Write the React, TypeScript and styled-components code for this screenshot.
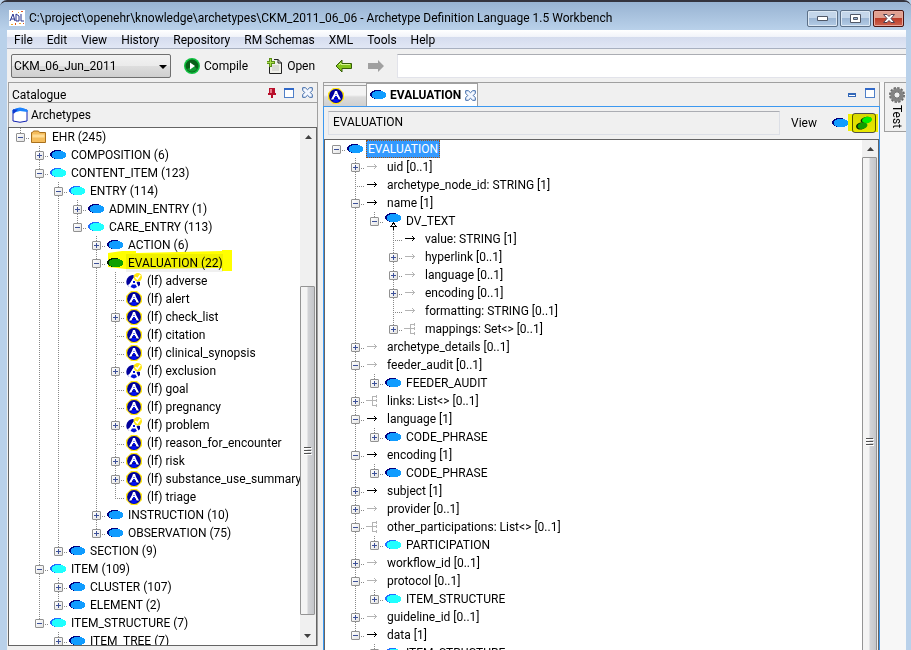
import React from "react";
import styled, { createGlobalStyle, css } from "styled-components";

const GlobalStyle = createGlobalStyle`
  *, *::before, *::after { box-sizing: border-box; }
  body {
    margin: 0;
    font-family: Roboto, "Noto Sans", sans-serif;
    font-size: 12px;
    line-height: 18px;
    color: #000;
    background: #b9d1ea;
  }
  button, input, select { font: inherit; color: inherit; }
`;

/* ---------- icons ---------- */

const Glyph = styled.svg`
  display: block;
  flex: none;
`;

type Tone = "blue" | "cyan" | "green";
const tones: Record<Tone, [string, string]> = {
  blue: ["#000080", "#109cff"],
  cyan: ["#2070ff", "#20ffff"],
  green: ["#002000", "#10a000"],
};

const ClassIcon = ({ tone = "blue" }: { tone?: Tone }) => (
  <Glyph width="16" height="16" viewBox="0 0 16 16" shapeRendering="crispEdges">
    <ellipse cx="7.5" cy="7.5" rx="7.5" ry="4.5" fill={tones[tone][0]} />
    <ellipse cx="9" cy="8" rx="7" ry="4.5" fill={tones[tone][1]} />
  </Glyph>
);

const InheritedIcon = () => (
  <Glyph width="16" height="18" viewBox="0 0 16 18" shapeRendering="crispEdges">
    <ellipse cx="7.5" cy="5.5" rx="7.5" ry="4.5" fill="#000080" />
    <ellipse cx="9" cy="6" rx="7" ry="4.5" fill="#109cff" />
    <path d="M8.5 10v1M8.5 15v3" stroke="#000" />
    <path d="M8.5 11l3 3.500h-6z" fill="#fff" stroke="#000" />
  </Glyph>
);

const ArchetypeIcon = () => (
  <Glyph width="16" height="16" viewBox="0 0 16 16">
    <path d="M5 0h6l5 5v6l-5 5H5l-5-5V5z" fill="#ffe610" />
    <circle cx="8" cy="8" r="6.900" fill="#00009c" />
    <path d="M7 3h2l1 3 3 5.500h-2.500L9.500 9h-3l-1 2.500H3L6 6z" fill="#fff" />
    <path d="M7.500 6h1v1h-1zM7 8h2v2H7z" fill="#0010e0" />
    <path d="M6 11h4l1 2.500-3 1-3-1z" fill="#0010f8" />
  </Glyph>
);

const SpecialisedIcon = () => (
  <Glyph width="16" height="16" viewBox="0 0 16 16">
    <path d="M7.500 2A7 7 0 0 0 1 12l2 1.500 5-8z" fill="#00009c" />
    <path d="M0 12l3-.5L7 5h2l2.500 6-1 4H5l-2-2z" fill="#fff" />
    <path d="M1 8l3-4 3-2 .5 2L4 10l-3 2zM12 8.500l2 .5v3l-1.500 1.500-2-4z" fill="#00009c" />
    <path d="M7 8h2v2H7zM6 11.500h3.500L11 14l-3 1.500L4.500 14z" fill="#0010d8" />
    <circle cx="11.800" cy="4.200" r="4.200" fill="#ffe610" />
    <path d="M9.300 4l2 2 3-4" fill="none" stroke="#fff" strokeWidth="1.500" />
  </Glyph>
);

const FolderIcon = () => (
  <Glyph width="16" height="16" viewBox="0 0 16 16">
    <path d="M.5 3.500h1l1-1.500h5l1 1.500h6v10H.5z" fill="#f5bd5c" stroke="#a9701c" />
    <path d="M1.500 5.500h12v3h-12z" fill="#ffdd96" />
  </Glyph>
);

const AttributeIcon = ({ optional }: { optional?: boolean }) => (
  <Glyph width="16" height="16" viewBox="0 0 16 16" shapeRendering="crispEdges">
    <path
      d="M1 7.500h10M8 5.500h1M9 6.500h1M9 8.500h1M8 9.500h1"
      stroke={optional ? "#b4b4b4" : "#000"}
      fill="none"
    />
  </Glyph>
);

const ContainerIcon = () => (
  <Glyph width="16" height="16" viewBox="0 0 16 16" shapeRendering="crispEdges">
    <path d="M0 7.500h6M6.500 3v10M6 3.500h5M6 7.500h5M6 12.500h5M10.500 2v3M10.500 6v3M10.500 11v3" stroke="#b4b4b4" fill="none" />
  </Glyph>
);

const AppIcon = () => (
  <Glyph width="16" height="16" viewBox="0 0 16 16">
    <path fill="#fff" d="M0 0h16v16H0z" />
    <path d="M1 11l3-7 2 7M2 9h3M7 4v7h3V6L7 4M12 4v7h3" fill="none" stroke="#27318f" />
    <path d="M3 1h1v1H3zM12 1h2v1h-2zM6 13h1v2H6zM14 13h1v1h-1z" fill="#e2571f" />
    <path d="M2 14h2v1H2zM9 2h1v1H9zM10 13h2v1h-2z" fill="#e9a92a" />
  </Glyph>
);

const CompileIcon = () => (
  <Glyph width="16" height="16" viewBox="0 0 16 16">
    <circle cx="8" cy="8" r="8" fill="#10c040" />
    <circle cx="8" cy="8" r="6.500" fill="#086018" />
    <path d="M3 11a6 6 0 0 0 10 0l-3-3z" fill="#109830" />
    <path d="M6 4.500v7L11 8z" fill="#fff" />
  </Glyph>
);

const OpenIcon = () => (
  <Glyph width="16" height="16" viewBox="0 0 16 16">
    <path d="M2.500 3.500v12h12V5L11 1.500H5z" fill="#f0f0ea" />
    <path d="M2.500 7v8.500h12V5L11 1.500H7" fill="none" stroke="#222" />
    <path d="M5 8h7M5 10h7M5 12h7" fill="none" stroke="#c4c4c0" />
    <path d="M11 1v4h4" fill="none" stroke="#222" />
    <path d="M2 0h3v3h3v3H5v3H2V6H0V3h2z" fill="#5c9018" />
    <path d="M3 1h1v3h3v1H4v3H3V5H0V4h3z" fill="#a8dc48" />
  </Glyph>
);

const BackIcon = () => (
  <Glyph width="18" height="14" viewBox="0 0 18 14">
    <path d="M1 7l6-6v3.500h9.500v5H7V13z" fill="#84c41c" stroke="#345c08" />
    <path d="M4 6l2-2v1.500h9" fill="none" stroke="#d4f48c" />
  </Glyph>
);

const ForwardIcon = () => (
  <Glyph width="18" height="14" viewBox="0 0 18 14">
    <path d="M17 7l-6-6v3H1v6h10v3z" fill="#a0a0a0" />
  </Glyph>
);

const PinIcon = () => (
  <Glyph width="8" height="12" viewBox="0 0 8 12" shapeRendering="crispEdges">
    <path d="M1 1h6v5h1v2H5v3H3V8H0V6h1z" fill="#b8102c" />
    <path d="M2 2h2v4H2z" fill="#e87888" />
  </Glyph>
);

const MaximiseIcon = () => (
  <Glyph width="10" height="10" viewBox="0 0 10 10" shapeRendering="crispEdges">
    <path d="M.5.5h9v9h-9z" fill="#fff" stroke="#5080c8" />
    <path d="M0 0h10v2H0z" fill="#3068c8" />
  </Glyph>
);

const MinimiseIcon = () => (
  <Glyph width="8" height="10" viewBox="0 0 8 10" shapeRendering="crispEdges">
    <path d="M.5 6.500h7v2h-7z" fill="#fff" stroke="#3468b8" />
    <path d="M0 5h8v2H0z" fill="#3468b8" />
  </Glyph>
);

const CloseIcon = () => (
  <Glyph width="11" height="11" viewBox="0 0 11 11">
    <path d="M.7.7h2.600l2.200 2 2.200-2h2.600v2.600l-2 2.200 2 2.200v2.600H7.700l-2.200-2-2.200 2H.7V7.700l2-2.200-2-2.200z" fill="#f4f8ff" stroke="#3c68a8" strokeWidth="1" />
  </Glyph>
);

const CatalogueIcon = () => (
  <Glyph width="16" height="16" viewBox="0 0 16 16">
    <path d="M1 3v11q7 2.500 14 0V3z" fill="#fff" stroke="#1020b0" />
    <path d="M.5 3Q8-2 15.500 3v2L8 4 .5 6z" fill="#1c84ff" />
    <path d="M1 2.500h5l-4 4H1z" fill="#1038d0" />
  </Glyph>
);

const DifferentialIcon = () => (
  <Glyph width="16" height="14" viewBox="0 0 16 14">
    <ellipse cx="10" cy="4" rx="5.500" ry="3" fill="#003000" transform="rotate(-12 10 4)" />
    <ellipse cx="11" cy="4" rx="5" ry="3.200" fill="#00f010" transform="rotate(-12 11 4)" />
    <ellipse cx="5" cy="10" rx="5" ry="3.500" fill="#002800" transform="rotate(-12 5 10)" />
    <ellipse cx="6.500" cy="9.700" rx="5" ry="3.200" fill="#109c00" transform="rotate(-12 6.500 9.700)" />
  </Glyph>
);

const GearIcon = () => (
  <Glyph width="16" height="16" viewBox="0 0 16 16">
    <circle cx="8" cy="8" r="6.800" fill="none" stroke="#686868" strokeWidth="2.400" strokeDasharray="2.300 1.260" />
    <circle cx="8" cy="8" r="5" fill="none" stroke="#848484" strokeWidth="3.400" />
    <circle cx="8" cy="8" r="3.200" fill="#f0f0f0" stroke="#606060" />
  </Glyph>
);

/* ---------- window frame ---------- */

const Frame = styled.div`
  height: 100vh;
  display: flex;
  flex-direction: column;
  overflow: hidden;
  border-top: 2px solid #34343e;
  border-radius: 7px 7px 0 0;
  background: #b9d1ea;
`;

const TitleBar = styled.header`
  flex: none;
  height: 28px;
  padding: 0 7px 0 9px;
  display: flex;
  align-items: center;
  gap: 4px;
  background: linear-gradient(#98b3d2, #b9d1ea);
`;

const Title = styled.h1`
  flex: 1;
  margin: 0;
  padding-top: 4px;
  font-size: 12px;
  font-weight: 400;
  white-space: nowrap;
`;

const TitleIcon = styled.span`
  padding-top: 4px;
`;

const CaptionButtons = styled.div`
  display: flex;
  gap: 2px;
  padding-top: 5px;
`;

const CaptionButton = styled.button<{ $danger?: boolean }>`
  width: 31px;
  height: 17px;
  padding: 0;
  display: flex;
  align-items: center;
  justify-content: center;
  border: 1px solid ${(p) => (p.$danger ? "#4c1410" : "#5c7088")};
  border-radius: 2px;
  box-shadow: inset 0 0 0 1px ${(p) => (p.$danger ? "#e8a89c" : "#dce8f4")};
  background: ${(p) =>
    p.$danger
      ? "linear-gradient(#e0a090 45%, #bc3c28 50%, #cc6450)"
      : "linear-gradient(#c4d6ea 45%, #9cb6d4 50%, #b4cce6)"};
`;

const Client = styled.div`
  flex: 1;
  min-height: 0;
  margin: 0 5px 0 7px;
  display: flex;
  flex-direction: column;
  background: #f0f0f0;
`;

const MenuBar = styled.nav`
  flex: none;
  height: 19px;
  padding-left: 7px;
  display: flex;
  gap: 14px;
  border-bottom: 1px solid #a8b0c0;
  background: linear-gradient(#fff, #f2f4fa 36%, #d5dcee 40%, #e1e7f5);
`;

const MenuItem = styled.button`
  padding: 0;
  border: 0;
  background: none;
  line-height: 20px;
`;

const Toolbar = styled.div`
  flex: none;
  height: 33px;
  padding: 5px 0 5px 4px;
  display: flex;
  align-items: center;
`;

const RepositorySelect = styled.select`
  width: 160px;
  height: 24px;
  padding: 0 0 0 2px;
  appearance: none;
  border: 1px solid #707070;
  border-radius: 2px;
  background: linear-gradient(#f2f2f2, #ebebeb 48%, #dddddd 52%, #cfcfcf);
`;

const SelectWrap = styled.div`
  position: relative;
  margin-right: 13px;
  &::after {
    content: "";
    position: absolute;
    right: 4px;
    top: 11px;
    border: 4px solid transparent;
    border-top-color: #000;
    pointer-events: none;
  }
`;

const ToolButton = styled.button<{ $gap: number }>`
  padding: 0;
  margin-right: ${(p) => p.$gap}px;
  display: flex;
  align-items: center;
  gap: 4px;
  border: 0;
  background: none;
  line-height: 18px;
`;

const AddressInput = styled.input`
  flex: 1;
  min-width: 0;
  height: 24px;
  border: 1px solid #e2e3ea;
  border-top-color: #abadb3;
  border-right: 0;
  background: #fff;
`;

/* ---------- panels ---------- */

const Workspace = styled.main`
  flex: 1;
  min-height: 0;
  display: grid;
  grid-template-columns: 311px minmax(0, 1fr) 26px;
  grid-template-rows: minmax(0, 1fr);
`;

const Catalogue = styled.section`
  min-height: 0;
  margin: 0 0 4px 1px;
  display: flex;
  flex-direction: column;
  border: 1px solid #a0a0a0;
  border-bottom: 0;
`;

const CatalogueHeader = styled.header`
  flex: none;
  height: 20px;
  padding: 0 4px 0 3px;
  display: flex;
  align-items: center;
  gap: 8px;
  border-bottom: 1px solid #a0a0a0;
`;

const PanelTitle = styled.h2`
  flex: 1;
  margin: 0;
  padding-top: 4px;
  font-size: 12px;
  font-weight: 400;
`;

const IconButton = styled.button`
  flex: none;
  padding: 0;
  border: 0;
  background: none;
`;

const SectionBar = styled.div`
  flex: none;
  height: 24px;
  padding: 0 3px;
  display: flex;
  align-items: center;
  gap: 3px;
`;

const TreeBox = styled.div<{ $open?: boolean }>`
  flex: 1;
  min-height: 0;
  display: flex;
  background: #fff;
  border: 1px solid #646464;
  ${(p) =>
    p.$open
      ? css`border-bottom: 0;`
      : css`margin: 0 0 0 -1px;`}
`;

const Details = styled.section`
  min-height: 0;
  margin-left: 5px;
  display: flex;
  flex-direction: column;
  border-top: 1px solid #a0a0a0;
`;

const TabStrip = styled.div`
  flex: none;
  height: 23px;
  padding-right: 4px;
  display: flex;
  align-items: flex-end;
  border: 1px solid #a0a0a0;
  border-width: 0 1px;
`;

const Tab = styled.button<{ $active?: boolean }>`
  padding: 0 0 0 4px;
  display: flex;
  align-items: center;
  gap: 4px;
  border: 1px solid #a0a0a0;
  border-bottom: 0;
  ${(p) =>
    p.$active
      ? css`
          height: 23px;
          padding: 0 1px 0 3px;
          background: #fff;
          font-weight: 700;
        `
      : css`
          width: 42px;
          height: 21px;
          border-right: 0;
          border-left: 0;
          background: linear-gradient(#f4f4f4 45%, #dcdcdc 55%, #d0d0d0);
        `}
`;

const StripSpace = styled.div`
  flex: 1;
`;

const StripTools = styled.div`
  align-self: center;
  padding-bottom: 4px;
  display: flex;
  gap: 9px;
`;

const DetailBody = styled.div`
  flex: 1;
  min-height: 0;
  display: flex;
  flex-direction: column;
  border: 1px solid #3c98f0;
  border-bottom: 0;
`;

const DetailBar = styled.div`
  flex: none;
  height: 32px;
  padding-left: 4px;
  display: flex;
  align-items: center;
`;

const NameInput = styled.input`
  flex: 1;
  min-width: 0;
  height: 24px;
  padding: 0 4px 2px;
  border: 1px solid #dcdfe6;
  border-top-color: #abadb3;
  background: #f0f0f0;
`;

const ViewLabel = styled.span`
  margin: 0 15px 0 11px;
`;

const ToggleWrap = styled.div`
  position: relative;
  padding: 0 3px 0 4px;
`;

const ToggleButton = styled.button`
  width: 24px;
  height: 20px;
  padding: 0;
  display: flex;
  align-items: center;
  justify-content: center;
  border: 1px solid #505050;
  border-radius: 3px;
  background: linear-gradient(#d8d8d8, #e8e8e8);
`;

const Marker = styled.svg`
  position: absolute;
  mix-blend-mode: multiply;
  pointer-events: none;
`;

const ToggleMarker = styled(Marker)`
  left: 0;
  top: 1px;
`;

const RowMarker = styled(Marker)`
  left: 0;
  top: -4px;
`;

const SideColumn = styled.aside`
  background: #f7f7f7;
`;

const SideTab = styled.button`
  width: 22px;
  height: 50px;
  margin-left: 4px;
  padding: 4px 0 0 3px;
  display: flex;
  flex-direction: column;
  align-items: center;
  gap: 2px;
  border: 1px solid #a0a0a0;
  border-right: 0;
  background: #f0f0f0;
`;

const SideTabText = styled.span`
  writing-mode: vertical-rl;
  line-height: 16px;
`;

/* ---------- scroll bar ---------- */

const ScrollBar = styled.div`
  flex: none;
  width: 16px;
  display: flex;
  flex-direction: column;
  overflow: hidden;
  background: #f0f0f0;
`;

const ScrollArrow = styled.button<{ $down?: boolean }>`
  flex: none;
  height: 17px;
  padding: 0;
  display: flex;
  align-items: center;
  justify-content: center;
  border: 0;
  background: none;
  transform: ${(p) => (p.$down ? "rotate(180deg)" : "none")};
`;

const ScrollGap = styled.div<{ $grow: number }>`
  flex: ${(p) => p.$grow} 1 0;
`;

const Thumb = styled.div<{ $grow?: number }>`
  flex: ${(p) => (p.$grow ? `${p.$grow} 1 0` : "0 0 570px")};
  margin-right: 1px;
  display: flex;
  align-items: center;
  justify-content: center;
  border: 1px solid #949494;
  border-radius: 1px;
  background: linear-gradient(to right, #f4f4f4 45%, #d2d3d6 55%, #c4c6ca);
`;

const Grip = () => (
  <Glyph width="8" height="8" viewBox="0 0 8 8" shapeRendering="crispEdges">
    <path d="M0 .5h7M0 3.500h7M0 6.500h7" stroke="#505050" />
    <path d="M0 1.500h8M0 4.500h8M0 7.500h8" stroke="#fff" />
  </Glyph>
);

const ArrowGlyph = () => (
  <Glyph width="7" height="4" viewBox="0 0 7 4">
    <path d="M0 4L3.500 0 7 4z" fill="#404040" />
  </Glyph>
);

/* ---------- tree ---------- */

type IconKind = Tone | "folder" | "a" | "s" | "inherit" | "req" | "opt" | "set";

interface Node {
  label: string;
  icon: IconKind;
  state?: "open" | "closed";
  selected?: boolean;
  marked?: boolean;
  children?: Node[];
}

const Rows = styled.div`
  flex: 1;
  min-width: 0;
  padding-left: 2px;
  overflow: hidden;
`;

const Row = styled.div`
  height: 18px;
  display: flex;
  white-space: nowrap;
`;

const dotsDown = "repeating-linear-gradient(to bottom, #888 0 1px, transparent 1px 2px)";
const dotsAcross = "repeating-linear-gradient(to right, #888 0 1px, transparent 1px 2px)";

const Guide = styled.span<{ $up?: boolean; $down?: boolean; $across?: boolean }>`
  flex: none;
  width: 19px;
  height: 18px;
  padding: 5px 0 0 5px;
  background-repeat: no-repeat;
  background-image: ${(p) =>
    [p.$up && dotsDown, p.$down && dotsDown, p.$across && dotsAcross].filter(Boolean).join(", ") || "none"};
  background-size: ${(p) =>
    [p.$up && "1px 10px", p.$down && "1px 8px", p.$across && "10px 1px"].filter(Boolean).join(", ") || "auto"};
  background-position: ${(p) =>
    [p.$up && "9px 0", p.$down && "9px 10px", p.$across && "9px 10px"].filter(Boolean).join(", ") || "0 0"};
`;

const Expander = styled.button`
  width: 9px;
  height: 9px;
  padding: 0;
  display: block;
  border: 1px solid #919191;
  border-radius: 1px;
  background: linear-gradient(135deg, #fff, #e4e4e4);
`;

const ItemBox = styled.span`
  position: relative;
  display: flex;
  align-items: center;
`;

const IconSlot = styled.span`
  width: 20px;
  padding-left: 1px;
`;

const Label = styled.span<{ $selected?: boolean; $marked?: boolean }>`
  padding-left: 2px;
  height: 18px;
  line-height: 18px;
  ${(p) =>
    p.$selected &&
    css`
      padding-right: 2px;
      color: #fff;
      background: #3399ff;
      outline: 1px dotted #a05010;
      outline-offset: -1px;
    `}
  ${(p) => p.$marked && css`background: #f0f0f0;`}
`;

const renderIcon = (kind: IconKind) => {
  switch (kind) {
    case "folder": return <FolderIcon />;
    case "a": return <ArchetypeIcon />;
    case "s": return <SpecialisedIcon />;
    case "inherit": return <InheritedIcon />;
    case "req": return <AttributeIcon />;
    case "opt": return <AttributeIcon optional />;
    case "set": return <ContainerIcon />;
    default: return <ClassIcon tone={kind} />;
  }
};

interface BranchProps {
  nodes: Node[];
  trail?: boolean[];
  linked?: boolean;
}

const Branch = ({ nodes, trail = [], linked = true }: BranchProps) => (
  <>
    {nodes.map((node, i) => {
      const more = i < nodes.length - 1;
      return (
        <React.Fragment key={i}>
          <Row role="treeitem" aria-selected={!!node.selected} aria-level={trail.length + 1}>
            {trail.map((line, n) => (
              <Guide key={n} $up={line} $down={line} />
            ))}
            <Guide $up={linked} $down={more} $across>
              {node.state && (
                <Expander aria-label={`${node.state === "open" ? "Collapse" : "Expand"} ${node.label}`}>
                  <Glyph width="7" height="7" viewBox="0 0 7 7" shapeRendering="crispEdges">
                    <path d={node.state === "open" ? "M1 3.500h5" : "M1 3.500h5M3.500 1v5"} stroke="#3c5098" />
                  </Glyph>
                </Expander>
              )}
            </Guide>
            <ItemBox>
              <IconSlot>{renderIcon(node.icon)}</IconSlot>
              <Label $selected={node.selected} $marked={node.marked}>{node.label}</Label>
              {node.marked && (
                <RowMarker width="128" height="21" viewBox="0 0 128 21">
                  <path d="M2 3l14-2h14v2l86-2V0h10v21h-10v-3l-96 1-18-2z" fill="#ff0" />
                </RowMarker>
              )}
            </ItemBox>
          </Row>
          {node.children && <Branch nodes={node.children} trail={[...trail, more]} />}
        </React.Fragment>
      );
    })}
  </>
);

const leaf = (label: string, icon: IconKind): Node => ({ label, icon });
const shut = (label: string, icon: IconKind): Node => ({ label, icon, state: "closed" });
const open = (label: string, icon: IconKind, children: Node[], extra: Partial<Node> = {}): Node => ({
  label, icon, state: "open", children, ...extra,
});

const archetypes: Node[] = [
  open("EHR (245)", "folder", [
    shut("COMPOSITION (6)", "blue"),
    open("CONTENT_ITEM (123)", "cyan", [
      open("ENTRY (114)", "cyan", [
        shut("ADMIN_ENTRY (1)", "blue"),
        open("CARE_ENTRY (113)", "cyan", [
          shut("ACTION (6)", "blue"),
          open("EVALUATION (22)", "green", [
            leaf("(lf) adverse", "s"),
            leaf("(lf) alert", "a"),
            shut("(lf) check_list", "a"),
            leaf("(lf) citation", "a"),
            leaf("(lf) clinical_synopsis", "a"),
            shut("(lf) exclusion", "s"),
            leaf("(lf) goal", "a"),
            leaf("(lf) pregnancy", "a"),
            shut("(lf) problem", "s"),
            leaf("(lf) reason_for_encounter", "a"),
            shut("(lf) risk", "a"),
            shut("(lf) substance_use_summary", "a"),
            leaf("(lf) triage", "a"),
          ], { marked: true }),
          shut("INSTRUCTION (10)", "blue"),
          shut("OBSERVATION (75)", "blue"),
        ]),
      ]),
      shut("SECTION (9)", "blue"),
    ]),
    open("ITEM (109)", "cyan", [shut("CLUSTER (107)", "blue"), shut("ELEMENT (2)", "blue")]),
    open("ITEM_STRUCTURE (7)", "cyan", [shut("ITEM_TREE (7)", "blue")]),
  ]),
];

const evaluation: Node[] = [
  open("EVALUATION", "blue", [
    shut("uid [0..1]", "opt"),
    leaf("archetype_node_id: STRING [1]", "req"),
    open("name [1]", "req", [
      open("DV_TEXT", "inherit", [
        leaf("value: STRING [1]", "req"),
        shut("hyperlink [0..1]", "opt"),
        shut("language [0..1]", "opt"),
        shut("encoding [0..1]", "opt"),
        leaf("formatting: STRING [0..1]", "opt"),
        shut("mappings: Set<> [0..1]", "set"),
      ]),
    ]),
    shut("archetype_details [0..1]", "opt"),
    open("feeder_audit [0..1]", "opt", [shut("FEEDER_AUDIT", "blue")]),
    shut("links: List<> [0..1]", "set"),
    open("language [1]", "req", [shut("CODE_PHRASE", "blue")]),
    open("encoding [1]", "req", [shut("CODE_PHRASE", "blue")]),
    shut("subject [1]", "req"),
    shut("provider [0..1]", "opt"),
    open("other_participations: List<> [0..1]", "set", [shut("PARTICIPATION", "cyan")]),
    shut("workflow_id [0..1]", "opt"),
    open("protocol [0..1]", "opt", [shut("ITEM_STRUCTURE", "cyan")]),
    shut("guideline_id [0..1]", "opt"),
    open("data [1]", "req", [shut("ITEM_STRUCTURE", "cyan")]),
  ], { selected: true }),
];

const menus = ["File", "Edit", "View", "History", "Repository", "RM Schemas", "XML", "Tools", "Help"];

export default function App() {
  return (
    <>
      <GlobalStyle />
      <Frame>
        <TitleBar>
          <TitleIcon><AppIcon /></TitleIcon>
          <Title>C:\project\openehr\knowledge\archetypes\CKM_2011_06_06 - Archetype Definition Language 1.5 Workbench</Title>
          <CaptionButtons>
            <CaptionButton aria-label="Minimise">
              <Glyph width="11" height="5" viewBox="0 0 11 5"><path d="M.5.5h10v4H.5z" fill="#fff" stroke="#505868" /></Glyph>
            </CaptionButton>
            <CaptionButton aria-label="Maximise">
              <Glyph width="11" height="9" viewBox="0 0 11 9"><path d="M.5.5h10v8H.5z" fill="#fff" stroke="#505868" /><path d="M3.500 3.500h4v2h-4z" fill="#9cb6d4" stroke="#505868" /></Glyph>
            </CaptionButton>
            <CaptionButton $danger aria-label="Close">
              <Glyph width="12" height="9" viewBox="0 0 12 9"><path d="M.5.5h3.500l2 2 2-2h3.500L8 4.500l3.500 4H8l-2-2-2 2H.5l3.500-4z" fill="#fff" stroke="#504050" /></Glyph>
            </CaptionButton>
          </CaptionButtons>
        </TitleBar>
        <Client>
          <MenuBar>
            {menus.map((m) => <MenuItem key={m}>{m}</MenuItem>)}
          </MenuBar>
          <Toolbar>
            <SelectWrap>
              <RepositorySelect aria-label="Repository profile">
                <option>CKM_06_Jun_2011</option>
              </RepositorySelect>
            </SelectWrap>
            <ToolButton $gap={19}><CompileIcon />Compile</ToolButton>
            <ToolButton $gap={20}><OpenIcon />Open</ToolButton>
            <ToolButton $gap={14} aria-label="Back"><BackIcon /></ToolButton>
            <ToolButton $gap={12} aria-label="Forward"><ForwardIcon /></ToolButton>
            <AddressInput aria-label="Address" />
          </Toolbar>
          <Workspace>
            <Catalogue>
              <CatalogueHeader>
                <PanelTitle>Catalogue</PanelTitle>
                <IconButton aria-label="Pin"><PinIcon /></IconButton>
                <IconButton aria-label="Maximise catalogue"><MaximiseIcon /></IconButton>
                <IconButton aria-label="Close catalogue"><CloseIcon /></IconButton>
              </CatalogueHeader>
              <SectionBar><CatalogueIcon />Archetypes</SectionBar>
              <TreeBox>
                <Rows role="tree" aria-label="Archetypes"><Branch nodes={archetypes} /></Rows>
                <ScrollBar>
                  <ScrollArrow aria-label="Scroll up"><ArrowGlyph /></ScrollArrow>
                  <ScrollGap $grow={142} />
                  <Thumb $grow={328}><Grip /></Thumb>
                  <ScrollGap $grow={13} />
                  <ScrollArrow $down aria-label="Scroll down"><ArrowGlyph /></ScrollArrow>
                </ScrollBar>
              </TreeBox>
            </Catalogue>
            <Details>
              <TabStrip>
                <Tab aria-label="Archetype"><ArchetypeIcon /></Tab>
                <Tab $active><ClassIcon />EVALUATION<CloseIcon /></Tab>
                <StripSpace />
                <StripTools>
                  <IconButton aria-label="Minimise panel"><MinimiseIcon /></IconButton>
                  <IconButton aria-label="Maximise panel"><MaximiseIcon /></IconButton>
                </StripTools>
              </TabStrip>
              <DetailBody>
                <DetailBar>
                  <NameInput aria-label="Class name" defaultValue="EVALUATION" readOnly />
                  <ViewLabel>View</ViewLabel>
                  <IconButton aria-label="Flat view"><ClassIcon /></IconButton>
                  <ToggleWrap>
                    <ToggleButton aria-label="Differential view" aria-pressed="true"><DifferentialIcon /></ToggleButton>
                    <ToggleMarker width="31" height="19" viewBox="0 0 31 19"><path d="M0 0h30v18H4v-1H0z" fill="#ff0" /></ToggleMarker>
                  </ToggleWrap>
                </DetailBar>
                <TreeBox $open>
                  <Rows role="tree" aria-label="Class structure"><Branch nodes={evaluation} linked={false} /></Rows>
                  <ScrollBar>
                    <ScrollArrow aria-label="Scroll up"><ArrowGlyph /></ScrollArrow>
                    <Thumb><Grip /></Thumb>
                  </ScrollBar>
                </TreeBox>
              </DetailBody>
            </Details>
            <SideColumn>
              <SideTab><GearIcon /><SideTabText>Test</SideTabText></SideTab>
            </SideColumn>
          </Workspace>
        </Client>
      </Frame>
    </>
  );
}
